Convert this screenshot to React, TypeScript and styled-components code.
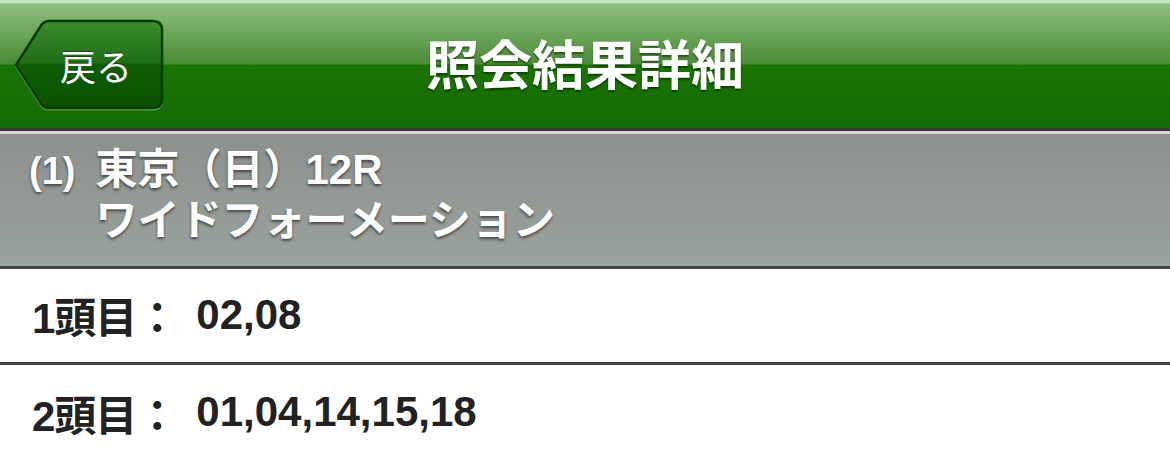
import React from "react";
import styled, { createGlobalStyle } from "styled-components";

type Selection = {
  label: string;
  numbers: string[];
};

const selections: Selection[] = [
  { label: "1頭目：", numbers: ["02", "08"] },
  { label: "2頭目：", numbers: ["01", "04", "14", "15", "18"] },
];

const GlobalStyle = createGlobalStyle`
  html, body {
    margin: 0;
    padding: 0;
    background: #ffffff;
  }
  body {
    width: 1170px;
    height: 452px;
    overflow: hidden;
    font-family: "Liberation Sans", "Noto Sans CJK JP", sans-serif;
  }
`;

const BackShape = () => (
  <ShapeSvg viewBox="0 0 150 92" preserveAspectRatio="none">
    <defs>
      <linearGradient id="backFill" x1="0" y1="0" x2="0" y2="1">
        <stop offset="0" stopColor="#3a8a2e" />
        <stop offset="0.48" stopColor="#216f16" />
        <stop offset="0.5" stopColor="#0f5d04" />
        <stop offset="1" stopColor="#0a5100" />
      </linearGradient>
    </defs>
    <path
      d="M2 46 L28 5 Q31 2 35 2 L139 2 Q148 2 148 11 L148 80 Q148 89 139 89 L35 89 Q31 89 28 86 Z"
      fill="none"
      stroke="#5f9f52"
      strokeWidth="2"
      transform="translate(0 1.5)"
    />
    <path
      d="M2 46 L28 5 Q31 2 35 2 L139 2 Q148 2 148 11 L148 80 Q148 89 139 89 L35 89 Q31 89 28 86 Z"
      fill="url(#backFill)"
      stroke="#063a00"
      strokeWidth="2.5"
    />
  </ShapeSvg>
);

const App: React.FC = () => (
  <Page>
    <GlobalStyle />
    <NavBar>
      <BackButton type="button">
        <BackShape />
        <BackLabel>戻る</BackLabel>
      </BackButton>
      <NavTitle>照会結果詳細</NavTitle>
    </NavBar>
    <RaceHeader>
      <RaceIndex>(1)</RaceIndex>
      <RaceLines>
        <RaceLine>東京（日）12R</RaceLine>
        <RaceLine>ワイドフォーメーション</RaceLine>
      </RaceLines>
    </RaceHeader>
    {selections.map(({ label, numbers }, i) => (
      <SelectionRow key={label} $last={i === selections.length - 1}>
        <SelectionLabel>{label}</SelectionLabel>
        <SelectionNumbers>{numbers.join(",")}</SelectionNumbers>
      </SelectionRow>
    ))}
  </Page>
);

export default App;

const Page = styled.div`
  width: 1170px;
  height: 452px;
  display: flex;
  flex-direction: column;
  overflow: hidden;
`;

const NavBar = styled.header`
  height: 128px;
  flex-shrink: 0;
  display: grid;
  grid-template-columns: 1fr auto 1fr;
  align-items: center;
  background: linear-gradient(
    to bottom,
    #c6e6bc 0,
    #c6e6bc 3px,
    #8fbf81 4px,
    #6ea75c 32px,
    #4a8b35 64px,
    #1a7401 65px,
    #166b07 100%
  );
  border-bottom: 3px solid #383838;
`;

const BackButton = styled.button`
  position: relative;
  justify-self: start;
  margin: 2px 0 0 14px;
  width: 150px;
  height: 92px;
  padding: 0 0 0 14px;
  border: none;
  background: transparent;
  display: flex;
  align-items: center;
  justify-content: center;
  cursor: pointer;
`;

const ShapeSvg = styled.svg`
  position: absolute;
  inset: 0;
  width: 100%;
  height: 100%;
  overflow: visible;
`;

const BackLabel = styled.span`
  position: relative;
  color: #ffffff;
  font-family: "Noto Sans CJK JP", sans-serif;
  font-size: 36px;
  font-weight: 400;
  line-height: 1;
  text-shadow: 0 -1px 1px rgba(0, 0, 0, 0.45);
`;

const NavTitle = styled.h1`
  grid-column: 2;
  margin: 0 0 4px;
  color: #ffffff;
  font-family: "Noto Sans CJK JP", sans-serif;
  font-size: 53px;
  font-weight: 700;
  letter-spacing: 0;
  line-height: 1;
  text-shadow: 0 2px 2px rgba(0, 0, 0, 0.45);
`;

const RaceHeader = styled.section`
  flex-shrink: 0;
  height: 138px;
  box-sizing: border-box;
  padding: 10px 0 0 29px;
  display: flex;
  align-items: baseline;
  gap: 20px;
  background: linear-gradient(to bottom, #8d908d 0%, #9aa39e 100%);
  border-top: 3px solid #d6d6d6;
  border-bottom: 3px solid #444444;
  color: #ffffff;
  font-weight: 700;
  text-shadow: 0 2px 3px rgba(0, 0, 0, 0.55);
`;

const RaceIndex = styled.span`
  font-size: 38px;
  line-height: 51px;
`;

const RaceLines = styled.div`
  display: flex;
  flex-direction: column;
`;

const RaceLine = styled.span`
  font-size: 42px;
  line-height: 51px;
  white-space: nowrap;
`;

const SelectionRow = styled.div<{ $last: boolean }>`
  flex-shrink: 0;
  height: 96px;
  display: flex;
  align-items: center;
  padding: 0 0 2px 32px;
  box-sizing: border-box;
  background: #ffffff;
  border-bottom: ${({ $last }) => ($last ? "none" : "3px solid #444444")};
  color: #222222;
  font-size: 42px;
  font-weight: 700;
`;

const SelectionLabel = styled.span`
  margin-right: 19px;
  letter-spacing: -1px;
  white-space: nowrap;
`;

const SelectionNumbers = styled.span`
  white-space: nowrap;
`;
